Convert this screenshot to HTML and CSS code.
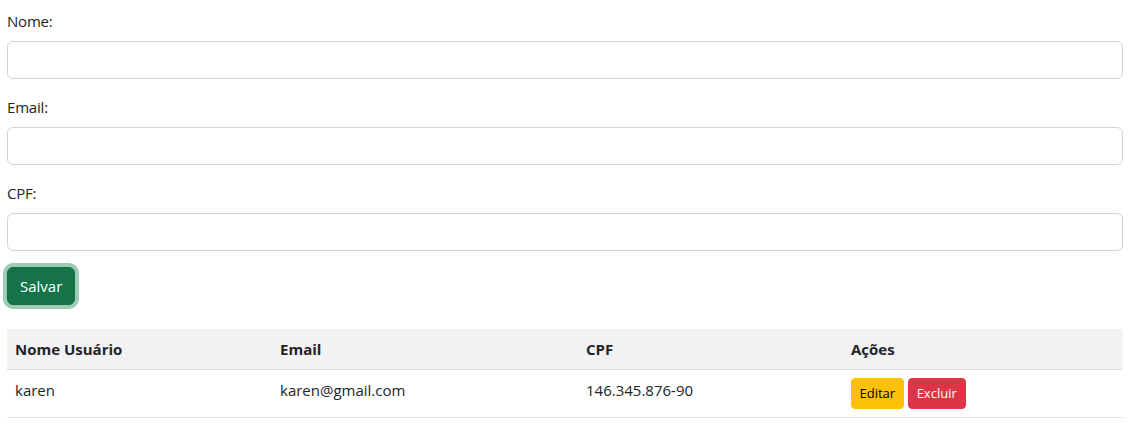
FILE: index.html
```html
<!DOCTYPE html>
<html lang="pt-BR">
<head>
<meta charset="utf-8">
<title>Usuários</title>
<link rel="stylesheet" href="styles.css">
</head>
<body>
<div class="page">
  <form class="user-form">
    <div class="field">
      <label class="form-label" for="nome">Nome:</label>
      <input class="form-control" id="nome" type="text">
    </div>
    <div class="field">
      <label class="form-label" for="email">Email:</label>
      <input class="form-control" id="email" type="email">
    </div>
    <div class="field">
      <label class="form-label" for="cpf">CPF:</label>
      <input class="form-control" id="cpf" type="text">
    </div>
    <button type="button" class="btn btn-save">Salvar</button>
  </form>

  <table class="users">
    <colgroup>
      <col class="c1"><col class="c2"><col class="c3"><col class="c4">
    </colgroup>
    <thead>
      <tr><th>Nome Usuário</th><th>Email</th><th>CPF</th><th>Ações</th></tr>
    </thead>
    <tbody>
      <tr>
        <td>karen</td>
        <td>karen@gmail.com</td>
        <td>146.345.876-90</td>
        <td><span class="actions"><button type="button" class="btn-sm btn-edit">Editar</button><button type="button" class="btn-sm btn-del">Excluir</button></span></td>
      </tr>
    </tbody>
  </table>
</div>
</body>
</html>
```

FILE: styles.css
```css
* { box-sizing: border-box; }
html, body { margin: 0; padding: 0; background: #fff; }
body {
  font-family: "Open Sans", "Noto Sans", sans-serif;
  font-size: 16px;
  line-height: 24px;
  color: #212529;
}
.page {
  padding: 9px 16px 0 7px;
}
.user-form {
  display: flex;
  flex-direction: column;
  align-items: flex-start;
}
.field {
  display: flex;
  flex-direction: column;
  width: 100%;
  margin-bottom: 16px;
}
.form-label {
  margin-bottom: 8px;
  font-size: 15px;
  letter-spacing: -0.2px;
}
.form-control {
  height: 38px;
  width: 100%;
  border: 1px solid #ced4da;
  border-radius: 6px;
  background: #fff;
  font: inherit;
  padding: 6px 12px;
}
.btn {
  font: inherit;
  font-size: 15px;
  border-radius: 6px;
  cursor: pointer;
}
.btn-save {
  margin-top: 0;
  height: 38px;
  padding: 0 12px;
  background: #157347;
  color: #fff;
  border: 1px solid #146c43;
  box-shadow: 0 0 0 4px rgba(60, 153, 110, 0.5);
}
.users {
  margin-top: 24px;
  width: 100%;
  border-collapse: collapse;
  table-layout: fixed;
}
.c1 { width: 265px; }
.c2 { width: 306px; }
.c3 { width: 265px; }
.c4 { width: auto; }
.users th, .users td {
  text-align: left;
  vertical-align: top;
  padding: 8px;
  border-bottom: 1px solid #dee2e6;
  font-size: 15px;
}
.users th {
  background: #f2f2f2;
  font-weight: 700;
}
.actions {
  display: flex;
  gap: 4px;
}
.btn-sm {
  font: inherit;
  font-size: 13px;
  line-height: 21px;
  padding: 4px 8px;
  border-radius: 4px;
  border: 1px solid transparent;
  cursor: pointer;
}
.btn-edit { background: #ffc107; border-color: #ffc107; color: #000; padding: 4px 7.5px; }
.btn-del { background: #dc3545; border-color: #dc3545; color: #fff; }
```
